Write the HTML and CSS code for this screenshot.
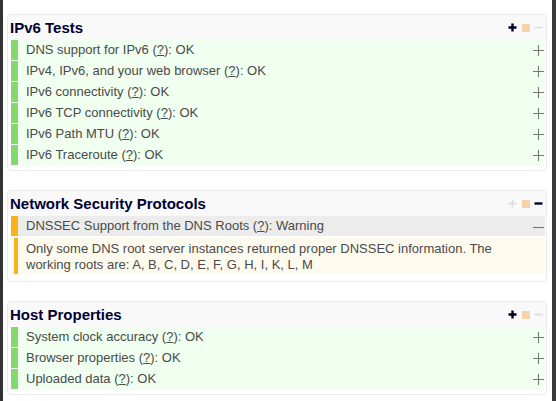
FILE: index.html
```html
<!DOCTYPE html>
<html>
<head>
<meta charset="utf-8">
<link rel="stylesheet" href="styles.css">
</head>
<body>
<div class="frame">
  <section class="box">
    <div class="box-head">
      <h2>IPv6 Tests</h2>
      <div class="tools">
        <svg class="t-plus strong" viewBox="0 0 9 9"><path d="M4.5 0.5v8M0.5 4.5h8"/></svg>
        <span class="t-square"></span>
        <svg class="t-minus faint" viewBox="0 0 9 9"><path d="M0.5 4.5h8"/></svg>
      </div>
    </div>
    <ul class="rows">
      <li class="row ok"><span class="mark"></span><span class="label">DNS support for IPv6 (<a>?</a>): OK</span><svg class="toggle" viewBox="0 0 11 11"><path d="M5.5 0v11M0 5.5h11"/></svg></li>
      <li class="row ok"><span class="mark"></span><span class="label">IPv4, IPv6, and your web browser (<a>?</a>): OK</span><svg class="toggle" viewBox="0 0 11 11"><path d="M5.5 0v11M0 5.5h11"/></svg></li>
      <li class="row ok"><span class="mark"></span><span class="label">IPv6 connectivity (<a>?</a>): OK</span><svg class="toggle" viewBox="0 0 11 11"><path d="M5.5 0v11M0 5.5h11"/></svg></li>
      <li class="row ok"><span class="mark"></span><span class="label">IPv6 TCP connectivity (<a>?</a>): OK</span><svg class="toggle" viewBox="0 0 11 11"><path d="M5.5 0v11M0 5.5h11"/></svg></li>
      <li class="row ok"><span class="mark"></span><span class="label">IPv6 Path MTU (<a>?</a>): OK</span><svg class="toggle" viewBox="0 0 11 11"><path d="M5.5 0v11M0 5.5h11"/></svg></li>
      <li class="row ok"><span class="mark"></span><span class="label">IPv6 Traceroute (<a>?</a>): OK</span><svg class="toggle" viewBox="0 0 11 11"><path d="M5.5 0v11M0 5.5h11"/></svg></li>
    </ul>
  </section>

  <section class="box">
    <div class="box-head">
      <h2>Network Security Protocols</h2>
      <div class="tools">
        <svg class="t-plus faint" viewBox="0 0 9 9"><path d="M4.5 0.5v8M0.5 4.5h8"/></svg>
        <span class="t-square"></span>
        <svg class="t-minus strong" viewBox="0 0 9 9"><path d="M0.5 4.5h8"/></svg>
      </div>
    </div>
    <ul class="rows">
      <li class="row warn open"><span class="mark"></span><span class="label">DNSSEC Support from the DNS Roots (<a>?</a>): Warning</span><svg class="toggle" viewBox="0 0 11 11"><path d="M0 6.5h11"/></svg></li>
      <li class="detail"><span class="dmark"></span><p>Only some DNS root server instances returned proper DNSSEC information. The working roots are: A, B, C, D, E, F, G, H, I, K, L, M</p></li>
    </ul>
  </section>

  <section class="box">
    <div class="box-head">
      <h2>Host Properties</h2>
      <div class="tools">
        <svg class="t-plus strong" viewBox="0 0 9 9"><path d="M4.5 0.5v8M0.5 4.5h8"/></svg>
        <span class="t-square"></span>
        <svg class="t-minus faint" viewBox="0 0 9 9"><path d="M0.5 4.5h8"/></svg>
      </div>
    </div>
    <ul class="rows">
      <li class="row ok"><span class="mark"></span><span class="label">System clock accuracy (<a>?</a>): OK</span><svg class="toggle" viewBox="0 0 11 11"><path d="M5.5 0v11M0 5.5h11"/></svg></li>
      <li class="row ok"><span class="mark"></span><span class="label">Browser properties (<a>?</a>): OK</span><svg class="toggle" viewBox="0 0 11 11"><path d="M5.5 0v11M0 5.5h11"/></svg></li>
      <li class="row ok"><span class="mark"></span><span class="label">Uploaded data (<a>?</a>): OK</span><svg class="toggle" viewBox="0 0 11 11"><path d="M5.5 0v11M0 5.5h11"/></svg></li>
    </ul>
  </section>
</div>
</body>
</html>
```

FILE: styles.css
```css
html, body {
  margin: 0;
  padding: 0;
  background: #fff;
}
body {
  font-family: "Liberation Sans", Arial, sans-serif;
  font-size: 13px;
  color: #4a4a4a;
}
.frame {
  box-sizing: border-box;
  width: 556px;
  height: 401px;
  overflow: hidden;
  border-left: 3px solid #333;
  border-right: 4px solid #3a3a3a;
  padding: 14px 5px 0 4px;
}
.box {
  border: 1px solid #ebebeb;
  border-radius: 4px;
  padding: 0 1px 4px 3px;
  margin-bottom: 19px;
  background: #fff;
}
.box-head {
  height: 25px;
  display: flex;
  align-items: center;
  justify-content: space-between;
  margin: 0 -1px 0 -3px;
  padding: 0 3px 0 2px;
  background: #f9f9fa;
  border-radius: 4px 4px 0 0;
}
.box-head h2 {
  margin: 0;
  font-size: 15px;
  font-weight: bold;
  color: #000033;
  line-height: 25px;
}
.tools {
  display: flex;
  align-items: center;
  gap: 4px;
}
.tools svg {
  width: 9px;
  height: 9px;
  fill: none;
}
.t-plus.strong path, .t-minus.strong path {
  stroke: #000022;
  stroke-width: 2.4;
}
.t-plus.faint path, .t-minus.faint path {
  stroke: #dcdcdc;
  stroke-width: 1.6;
}
.t-square {
  width: 8px;
  height: 8px;
  background: #f7d3a8;
  margin-left: 1px;
}
.rows {
  list-style: none;
  margin: 0;
  padding: 0;
}
.row {
  height: 21px;
  display: flex;
  align-items: center;
  background: #f0fff0;
}
.row .mark {
  width: 7px;
  height: 20px;
  align-self: flex-start;
  flex: none;
}
.row.ok .mark {
  background: #84d86e;
}
.row.warn .mark {
  background: #f7b318;
}
.row.open {
  background: #ececec;
  height: 20px;
}
.label {
  flex: 1;
  margin-left: 8px;
  padding-bottom: 2px;
  color: #4a4a4a;
  white-space: nowrap;
}
.label a {
  text-decoration: underline;
  color: #4a4a4a;
}
.toggle {
  width: 11px;
  height: 11px;
  flex: none;
  margin-right: 1px;
  fill: none;
}
.toggle path {
  stroke: #777;
  stroke-width: 1.1;
}
.detail {
  display: flex;
  background: #fffaee;
  margin-top: 2px;
  margin-bottom: 3px;
}
.dmark {
  width: 4px;
  margin-left: 3px;
  background: #f7b318;
  flex: none;
}
.detail p {
  margin: 0;
  padding: 3px 20px 1px 8px;
  line-height: 16px;
  color: #4a4a4a;
}
```
